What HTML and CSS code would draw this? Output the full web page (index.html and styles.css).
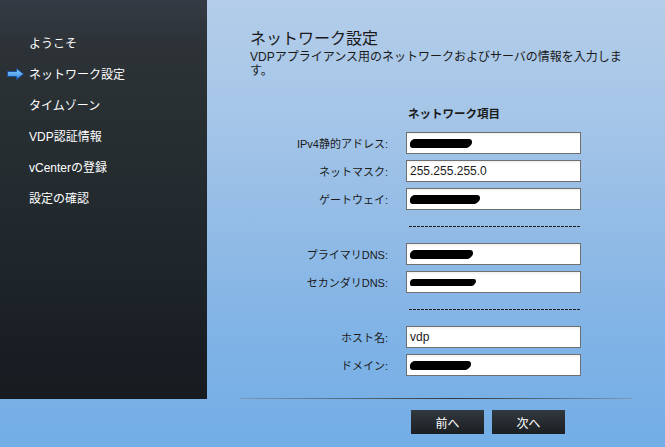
FILE: index.html
```html
<!DOCTYPE html>
<html lang="ja">
<head>
    <meta charset="UTF-8">
    <title>ネットワーク設定</title>
    <link rel="stylesheet" href="styles.css">
</head>
<body>
    <div class="wizard">
        <nav class="steps">
            <div class="step"><span class="step-icon"></span>ようこそ</div>
            <div class="step active">
                <span class="step-icon">
                    <svg width="17" height="12" viewBox="0 0 17 12">
                        <defs>
                            <linearGradient id="arrowFill" x1="0" y1="0" x2="0" y2="1">
                                <stop offset="0" stop-color="#8fd0ff"/>
                                <stop offset="1" stop-color="#2f86e0"/>
                            </linearGradient>
                        </defs>
                        <path d="M0.5 3.5 H9.5 V0.5 L16.5 6 L9.5 11.5 V8.5 H0.5 Z" fill="url(#arrowFill)" stroke="#1b4f9e" stroke-width="1"/>
                    </svg>
                </span>ネットワーク設定
            </div>
            <div class="step"><span class="step-icon"></span>タイムゾーン</div>
            <div class="step"><span class="step-icon"></span>VDP認証情報</div>
            <div class="step"><span class="step-icon"></span>vCenterの登録</div>
            <div class="step"><span class="step-icon"></span>設定の確認</div>
        </nav>

        <main class="content">
            <div class="page">
                <h1>ネットワーク設定</h1>
                <p class="desc">VDPアプライアンス用のネットワークおよびサーバの情報を入力します。</p>

                <div class="form">
                    <div class="form-head">ネットワーク項目</div>

                    <label>IPv4静的アドレス:</label>
                    <div class="field"><span class="blob blob-ip"></span></div>
                    <label>ネットマスク:</label>
                    <div class="field">255.255.255.0</div>
                    <label>ゲートウェイ:</label>
                    <div class="field"><span class="blob blob-gw"></span></div>

                    <div class="sep"></div>

                    <label>プライマリDNS:</label>
                    <div class="field"><span class="blob blob-dns1"></span></div>
                    <label>セカンダリDNS:</label>
                    <div class="field"><span class="blob blob-dns2"></span></div>

                    <div class="sep"></div>

                    <label>ホスト名:</label>
                    <div class="field">vdp</div>
                    <label>ドメイン:</label>
                    <div class="field"><span class="blob blob-dom"></span></div>
                </div>
            </div>
            <div class="rule"></div>
        </main>

        <div class="buttons">
            <button class="btn">前へ</button>
            <button class="btn">次へ</button>
        </div>
    </div>
</body>
</html>
```

FILE: styles.css
```css
html, body {
    margin: 0;
    height: 100%;
}
body {
    font-family: "Liberation Sans", "Noto Sans CJK JP", sans-serif;
    font-size: 12px;
    color: #1a1a1a;
    background: linear-gradient(#b3cde9 0%, #a6c6e8 25%, #93bce6 50%, #80b3e6 75%, #72aee6 100%);
}
.wizard {
    display: grid;
    grid-template-columns: 207px 1fr;
    grid-template-rows: 399px auto;
    height: 100%;
}

/* sidebar */
.steps {
    padding-top: 27px;
    background: linear-gradient(#343b45 0%, #2c3236 12%, #262d31 40%, #1d252a 70%, #1a1e25 85%, #181b1f 100%);
}
.step {
    display: flex;
    align-items: center;
    height: 31px;
    padding-left: 7px;
    color: #fff;
    font-size: 12px;
}
.step-icon {
    display: flex;
    align-items: center;
    width: 22px;
    height: 12px;
}
.step-icon svg {
    display: block;
}

/* main column */
.content {
    display: flex;
    flex-direction: column;
}
.page {
    padding: 29px 0 0 43px;
}
h1 {
    margin: 0;
    font-size: 16px;
    font-weight: normal;
    line-height: 20px;
}
.desc {
    margin: 1px 0 0;
    width: 372px;
    line-height: 14px;
}
.form {
    display: grid;
    grid-template-columns: 138px 175px;
    column-gap: 18px;
    row-gap: 6px;
    margin-top: 27px;
}
.form-head {
    grid-column: 2;
    height: 18px;
    line-height: 18px;
    margin-bottom: 3px;
    padding-left: 2px;
    font-weight: bold;
    font-size: 11.5px;
}
.form label {
    grid-column: 1;
    align-self: center;
    text-align: right;
    font-size: 11px;
}
.field {
    grid-column: 2;
    display: flex;
    align-items: center;
    box-sizing: border-box;
    height: 22px;
    padding-left: 3px;
    border: 1px solid #6f6f6f;
    background: linear-gradient(#f0f0f0, #fff 3px);
    font-size: 12px;
}
.blob {
    display: block;
    height: 9px;
    background: #000;
    border-radius: 5px 4px 5px 4px;
    box-shadow: 2px -1px 0 -1px #000, -1px 1px 0 -1px #000;
}
.blob-ip { width: 61px; }
.blob-gw { width: 69px; }
.blob-dns1 { width: 62px; }
.blob-dns2 { width: 65px; height: 7px; }
.blob-dom { width: 60px; }
.sep {
    grid-column: 2;
    height: 21px;
    margin: 0 1px 0 3px;
    background: repeating-linear-gradient(to right, #1e1e1e 0 3px, transparent 3px 4px) 0 10px / 100% 1px no-repeat;
}
.rule {
    margin: auto 33px 0;
    height: 1px;
    background: linear-gradient(to right, #7d9ab8, #3c4a58 45%, #2e3944 55%, #7d9ab8);
}

/* footer buttons */
.buttons {
    grid-column: 2;
    display: flex;
    gap: 8px;
    padding: 11px 0 0 204px;
    align-items: flex-start;
}
.btn {
    width: 73px;
    height: 24px;
    border: 0;
    padding: 0;
    color: #fff;
    font-family: "Liberation Sans", "Noto Sans CJK JP", sans-serif;
    font-size: 12px;
    background: linear-gradient(#32393f, #1a1e22);
}
```
